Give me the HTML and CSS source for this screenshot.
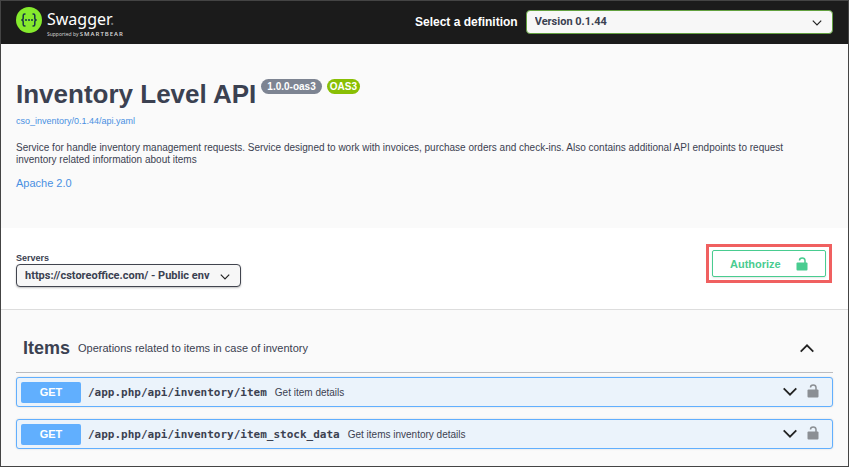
FILE: index.html
```html
<!DOCTYPE html>
<html lang="en">
<head>
<meta charset="utf-8">
<meta name="viewport" content="width=device-width, initial-scale=1">
<title>Inventory Level API</title>
<link rel="stylesheet" href="styles.css">
</head>
<body>
<svg class="defs" aria-hidden="true">
  <symbol id="down" viewBox="0 0 20 20"><path d="M3 6l7 7 7-7" fill="none" stroke="currentColor"/></symbol>
  <symbol id="lock" viewBox="0 0 12 14"><path d="M3.500 3.500Q3.500 1 6.200 1T9 3.500V6" fill="none" stroke="currentColor" stroke-width="1.500"/><rect x="0.500" y="5.500" width="11" height="8" rx="1" fill="currentColor"/></symbol>
</svg>
<header class="topbar">
  <a class="brand" href="#" aria-label="Swagger">
    <svg class="brand-mark" viewBox="0 0 26 26" aria-hidden="true">
      <circle cx="13" cy="13" r="13" fill="#85ea2d"/>
      <g fill="none" stroke="#173647" stroke-width="1.500">
        <path d="M9.500 7H8.700Q7.200 7 7.200 8.500V11Q7.200 13 5.300 13Q7.200 13 7.200 15V17.500Q7.200 19 8.700 19H9.500"/>
        <path d="M16.500 7H17.300Q18.800 7 18.800 8.500V11Q18.800 13 20.700 13Q18.800 13 18.800 15V17.500Q18.800 19 17.300 19H16.500"/>
      </g>
      <g fill="#173647"><circle cx="10" cy="13" r="1"/><circle cx="13" cy="13" r="1"/><circle cx="16" cy="13" r="1"/></g>
    </svg>
    <span class="brand-text">
      <span class="brand-name">Swagger<span class="brand-dot">.</span></span>
      <span class="brand-by">Supported by <b>SMARTBEAR</b></span>
    </span>
  </a>
  <div class="definition">
    <label for="definition">Select a definition</label>
    <span class="select select-definition">
      <select id="definition"><option>Version 0.1.44</option></select>
      <svg aria-hidden="true"><use href="#down"/></svg>
    </span>
  </div>
</header>
<main>
  <section class="info">
    <div class="title-row">
      <h1>Inventory Level API</h1>
      <span class="badge">1.0.0-oas3</span>
      <span class="badge badge-oas">OAS3</span>
    </div>
    <a class="spec-link" href="#">cso_inventory/0.1.44/api.yaml</a>
    <p>Service for handle inventory management requests. Service designed to work with invoices, purchase orders and check-ins. Also contains additional API endpoints to request<br>inventory related information about items</p>
    <a class="license" href="#">Apache 2.0</a>
  </section>
  <section class="schemes">
    <div class="servers">
      <label for="servers">Servers</label>
      <span class="select select-server">
        <select id="servers"><option>https://cstoreoffice.com/ - Public env</option></select>
        <svg aria-hidden="true"><use href="#down"/></svg>
      </span>
    </div>
    <div class="highlight">
      <button class="authorize" type="button">Authorize
        <svg class="lock" aria-hidden="true"><use href="#lock"/></svg>
      </button>
    </div>
  </section>
  <section class="operations">
    <div class="tag">
      <h2>Items</h2>
      <span class="tag-text">Operations related to items in case of inventory</span>
      <button class="icon-button" type="button" aria-label="Collapse Items"><svg class="arrow arrow-up" aria-hidden="true"><use href="#down"/></svg></button>
    </div>
    <div class="operation">
      <span class="method">GET</span>
      <span class="path">/app.php/api/inventory/item</span>
      <span class="summary">Get item details</span>
      <button class="icon-button" type="button" aria-label="Expand operation"><svg class="arrow" aria-hidden="true"><use href="#down"/></svg></button>
      <button class="icon-button operation-lock" type="button" aria-label="Authorization"><svg class="lock" aria-hidden="true"><use href="#lock"/></svg></button>
    </div>
    <div class="operation">
      <span class="method">GET</span>
      <span class="path">/app.php/api/inventory/item_stock_data</span>
      <span class="summary">Get items inventory details</span>
      <button class="icon-button" type="button" aria-label="Expand operation"><svg class="arrow" aria-hidden="true"><use href="#down"/></svg></button>
      <button class="icon-button operation-lock" type="button" aria-label="Authorization"><svg class="lock" aria-hidden="true"><use href="#lock"/></svg></button>
    </div>
  </section>
</main>
</body>
</html>
```
FILE: styles.css
```css
* { box-sizing: border-box; }
body {
  margin: 0;
  min-height: 100vh;
  border: 1px solid #444;
  background: #fafafa;
  color: #3b4151;
  font: 11px/12px "Liberation Sans", Arial, sans-serif;
}
h1, h2, p { margin: 0; }
a { color: #4990e2; text-decoration: none; }
button, select { font: inherit; color: inherit; }
button { cursor: pointer; }
svg { display: block; }
.defs { display: none; }

.topbar {
  display: flex;
  justify-content: space-between;
  align-items: flex-start;
  height: 43px;
  padding: 6px 15px 0;
  background: #1b1b1b;
  color: #fff;
}
.brand { display: flex; gap: 5px; color: #fff; }
.brand-mark { width: 26px; height: 26px; }
.brand-text { display: flex; flex-direction: column; padding-top: 2px; }
.brand-name { font: 16px/21px "Noto Sans", sans-serif; }
.brand-dot { color: #777; }
.brand-by { font: 5px/8px "Open Sans", sans-serif; white-space: nowrap; color: #ddd; }
.brand-by b { font-size: 6px; font-weight: 600; letter-spacing: 1px; }
.definition {
  display: flex;
  align-items: center;
  gap: 8px;
  width: 418px;
  padding-top: 3px;
  font-size: 12px;
  font-weight: bold;
}
.definition label { white-space: nowrap; }

.select { display: grid; align-items: center; color: #3b4151; font: bold 11px/12px Roboto, sans-serif; }
.select select {
  grid-area: 1 / 1;
  width: 100%;
  height: 24px;
  padding: 0 28px 0 8px;
  border: 1px solid #41444e;
  border-radius: 4px;
  background: #f7f7f7;
  appearance: none;
}
.select svg { grid-area: 1 / 1; justify-self: end; width: 12px; height: 12px; margin: 2px 10px 0 0; color: #222; stroke-width: 2px; pointer-events: none; }
.select-definition { flex: 1; }
.select-definition select { border-color: #62a03f; }
.select-server select { box-shadow: 0 1px 2px rgba(0, 0, 0, .25); }

.info { padding: 33px 15px 39px; }
.title-row { display: flex; align-items: flex-start; gap: 5px; }
h1 { font-size: 26px; line-height: 34px; }
.badge {
  margin-top: 2px;
  padding: 0 6px;
  border-radius: 8px;
  background: #7d8492;
  color: #fff;
  font-size: 10px;
  font-weight: bold;
  line-height: 15px;
}
.badge-oas { background: #89bf04; padding: 0 3px; }
.spec-link { display: block; margin-top: 4px; font-size: 9px; }
.info p { margin: 15px 0 11px; font-size: 10px; }
.license { display: block; }

.schemes {
  display: flex;
  justify-content: space-between;
  align-items: flex-start;
  padding: 16px;
  padding-left: 15px;
  min-height: 82px;
  background: #fff;
  border-bottom: 1px solid #ddd;
}
.servers { width: 225px; padding-top: 8px; }
.servers label { display: block; font-size: 9px; font-weight: bold; }
.servers select { height: 23px; }
.highlight { border: 3px solid #f06060; padding: 3px; }
.authorize {
  display: flex;
  align-items: center;
  justify-content: space-between;
  width: 114px;
  height: 27px;
  padding: 0 17px;
  border: 1px solid #49cc90;
  border-radius: 2px;
  background: #fff;
  color: #49cc90;
  font-weight: bold;
  box-shadow: 0 1px 2px rgba(0, 0, 0, .1);
}
.lock { width: 12px; height: 14px; }

.operations { padding: 0 15px; }
.tag {
  display: flex;
  align-items: center;
  height: 63px;
  margin-bottom: 4px;
  padding: 13px 17px 0 7px;
  border-bottom: 1px solid #bbbcc0;
}
h2 { font-size: 18px; line-height: 22px; }
.tag-text { margin-left: 8px; }
.icon-button { margin-left: auto; padding: 0; border: 0; background: none; }
.arrow { width: 18px; height: 18px; color: #222; stroke-width: 2px; }
.arrow-up { transform: rotate(180deg); }
.operation {
  display: flex;
  align-items: center;
  height: 30px;
  margin-bottom: 12px;
  padding: 0 13px 0 4px;
  border: 1px solid #61affe;
  border-radius: 3px;
  background: #ebf3fb;
  box-shadow: 0 0 2px rgba(0, 0, 0, .15);
}
.method { width: 60px; border-radius: 2px; background: #61affe; color: #fff; font-weight: bold; line-height: 21px; text-align: center; }
.path { margin-left: 7px; padding-top: 1px; font: bold 11px/16px "DejaVu Sans Mono", monospace; }
.summary { margin-left: 8px; padding-top: 1px; font-size: 10px; }
.operation-lock { margin-left: 8px; padding-bottom: 2px; color: #8b8f94; }
```
